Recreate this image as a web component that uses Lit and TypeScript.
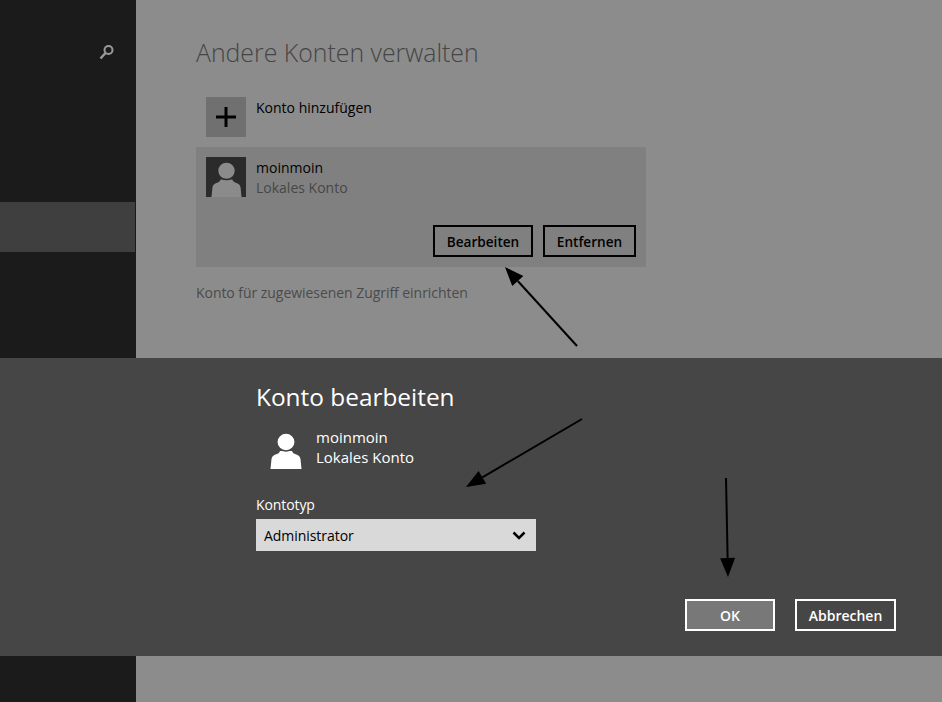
import { LitElement, html, css, svg } from "lit";
import { customElement } from "lit/decorators.js";

const bodyPath = "M0.500 36L1.500 26C2 23 4 22 7 21C8.500 20.500 9.500 19.500 10 18L22 18C22.500 19.500 23.500 20.500 25 21C28 22 30 23 30.500 26L31.500 36Z";

@customElement("app-root")
export class AppRoot extends LitElement {
  static styles = css`
    :host {
      display: block;
      position: relative;
      width: 942px;
      height: 702px;
      overflow: hidden;
      background: #8c8c8c;
      font-family: "Open Sans", "Noto Sans", sans-serif;
      font-size: 14px;
      line-height: 20px;
      color: #000;
    }
    .top { display: flex; height: 358px; }
    .side { width: 136px; background: #1b1b1b; flex: none; }
    .search { display: flex; justify-content: flex-end; padding: 44px 21px 0 0; height: 202px; box-sizing: border-box; }
    .search svg { display: block; width: 16px; height: 16px; }
    .selected { height: 50px; width: 135px; background: #3f3f3f; }
    .main { flex: 1; padding: 36px 0 0 60px; box-sizing: border-box; }
    h1 { margin: 0; font-size: 24.85px; line-height: 33px; font-weight: 300; color: #454545; }
    .add { display: flex; gap: 10px; padding: 28px 0 0 10px; height: 78px; box-sizing: border-box; }
    .tile { width: 40px; height: 40px; flex: none; background: #707070; display: flex; align-items: center; justify-content: center; }
    .tile svg { display: block; width: 20px; height: 20px; }
    .label-text { padding-top: 1px; }
    .card { width: 450px; height: 120px; box-sizing: border-box; background: #808080; padding: 10px; display: flex; flex-direction: column; justify-content: space-between; }
    .user { display: flex; gap: 10px; }
    .avatar { width: 40px; height: 40px; flex: none; background: #2b2b2b; display: flex; align-items: flex-end; justify-content: center; }
    .avatar svg { display: block; width: 31px; height: 35px; color: #8b8b8b; --gap: #2b2b2b; }
    .muted { color: #474747; }
    .actions { display: flex; justify-content: flex-end; gap: 10px; }
    .btn { height: 32px; box-sizing: border-box; border: 2px solid #000; padding-top: 1px; display: flex; align-items: center; justify-content: center; font-weight: 600; font-size: 13.6px; }
    .edit { width: 100px; }
    .remove { width: 93px; }
    .link { margin-top: 16px; color: #4b4b4b; letter-spacing: -0.05px; }
    .dialog { height: 298px; box-sizing: border-box; background: #464646; padding: 22px 46px 25px 256px; color: #fff; display: flex; flex-direction: column; }
    h2 { margin: 0; font-size: 24.4px; line-height: 34px; font-weight: 400; }
    .duser { display: flex; gap: 14px; padding: 13px 0 0 14px; height: 57px; box-sizing: border-box; font-size: 15px; }
    .duser svg { display: block; width: 32px; height: 36px; margin-top: 6px; color: #fff; --gap: #464646; }
    .label { margin-top: 24px; letter-spacing: -0.1px; }
    .select { margin-top: 4px; width: 280px; height: 32px; box-sizing: border-box; padding: 1px 10px 0 8px; background: #d9d9d9; color: #000; display: flex; align-items: center; justify-content: space-between; }
    .select span { letter-spacing: -0.05px; }
    .select svg { display: block; width: 14px; height: 9px; }
    .dactions { margin-top: auto; display: flex; justify-content: flex-end; gap: 20px; }
    .dactions .btn { border-color: #fff; font-size: 14px; }
    .ok { width: 90px; background: #787878; }
    .cancel { width: 101px; }
    .bottom { display: flex; height: 46px; }
    .arrows { position: absolute; inset: 0; width: 942px; height: 702px; pointer-events: none; }
    .person-body { fill: currentColor; }
    .person-head { fill: currentColor; stroke: var(--gap); stroke-width: 1.500; }
  `;

  person() {
    return html`<svg viewBox="0 0 32 36" preserveAspectRatio="none">
      <path class="person-body" d=${bodyPath}/>
      <ellipse class="person-head" cx="16" cy="9" rx="9.200" ry="9"/>
    </svg>`;
  }

  arrow(x1: number, y1: number, x2: number, y2: number) {
    const a = Math.atan2(y2 - y1, x2 - x1);
    const L = 19, W = 7.500;
    const bx = x2 - L * Math.cos(a), by = y2 - L * Math.sin(a);
    const px = -Math.sin(a) * W, py = Math.cos(a) * W;
    return svg`<line x1=${x1} y1=${y1} x2=${bx} y2=${by} stroke="#000" stroke-width="2"/>
      <polygon points="${x2},${y2} ${bx + px},${by + py} ${bx - px},${by - py}" fill="#000"/>`;
  }

  render() {
    return html`
      <div class="top">
        <div class="side">
          <div class="search">
            <svg viewBox="0 0 16 16" fill="none" stroke="#9a9a9a">
              <circle cx="9.500" cy="6" r="4" stroke-width="2"/>
              <line x1="6.500" y1="9" x2="1.500" y2="14.500" stroke-width="2.500"/>
            </svg>
          </div>
          <div class="selected"></div>
        </div>
        <div class="main">
          <h1>Andere Konten verwalten</h1>
          <div class="add">
            <div class="tile">
              <svg viewBox="0 0 20 20"><path d="M8.500 0h3v8.500H20v3h-8.500V20h-3v-8.500H0v-3h8.500z" fill="#000"/></svg>
            </div>
            <div class="label-text">Konto hinzufügen</div>
          </div>
          <div class="card">
            <div class="user">
              <div class="avatar">${this.person()}</div>
              <div class="label-text"><div>moinmoin</div><div class="muted">Lokales Konto</div></div>
            </div>
            <div class="actions">
              <div class="btn edit">Bearbeiten</div>
              <div class="btn remove">Entfernen</div>
            </div>
          </div>
          <div class="link">Konto für zugewiesenen Zugriff einrichten</div>
        </div>
      </div>
      <div class="dialog">
        <h2>Konto bearbeiten</h2>
        <div class="duser">
          ${this.person()}
          <div><div>moinmoin</div><div>Lokales Konto</div></div>
        </div>
        <div class="label">Kontotyp</div>
        <div class="select">
          <span>Administrator</span>
          <svg viewBox="0 0 14 9"><path d="M1.500 1.500L7 7l5.500-5.500" fill="none" stroke="#000" stroke-width="2.500"/></svg>
        </div>
        <div class="dactions">
          <div class="btn ok">OK</div>
          <div class="btn cancel">Abbrechen</div>
        </div>
      </div>
      <div class="bottom"><div class="side"></div></div>
      <svg class="arrows" viewBox="0 0 942 702">
        ${this.arrow(577, 346, 505, 267)}
        ${this.arrow(582, 419, 466, 487)}
        ${this.arrow(726, 478, 728, 577)}
      </svg>
    `;
  }
}
